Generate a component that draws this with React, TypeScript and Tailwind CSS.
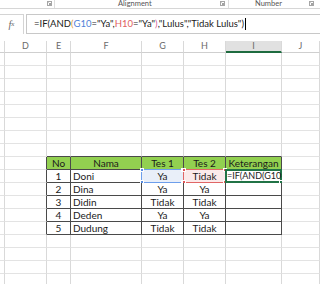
const COLS = ['', 'D', 'E', 'F', 'G', 'H', 'I', 'J'];

const TABLE = [
    ['No', 'Nama', 'Tes 1', 'Tes 2', 'Keterangan'],
    ['1', 'Doni', 'Ya', 'Tidak', ''],
    ['2', 'Dina', 'Ya', 'Ya', ''],
    ['3', 'Didin', 'Tidak', 'Tidak', ''],
    ['4', 'Deden', 'Ya', 'Ya', ''],
    ['5', 'Dudung', 'Tidak', 'Tidak', ''],
];

const FIRST_ROW = 9;
const ROWS = Array.from({ length: 18 }, (_, i) => i + 1);

function Launcher() {
    return (
        <svg width="5" height="5" viewBox="0 0 5 5" className="block">
            <rect x="0.5" y="0.5" width="4" height="4" fill="none" stroke="#a6a6a6" strokeWidth="1" />
            <path d="M1.5 1.5 L3.5 3.5 M3.5 2 L3.5 3.5 L2 3.5" stroke="#8a8a8a" strokeWidth="0.8" fill="none" />
        </svg>
    );
}

function Corners({ color }: { color: string }) {
    const sq = 'absolute h-[4px] w-[4px] border border-white';
    return (
        <>
            <span className={`${sq} -left-[2px] -top-[2px]`} style={{ background: color }} />
            <span className={`${sq} -right-[2px] -top-[2px]`} style={{ background: color }} />
            <span className={`${sq} -left-[2px] -bottom-[2px]`} style={{ background: color }} />
            <span className={`${sq} -right-[2px] -bottom-[2px]`} style={{ background: color }} />
        </>
    );
}

function Cell({ r, c }: { r: number; c: number }) {
    const inTable = r >= FIRST_ROW && r < FIRST_ROW + TABLE.length && c >= 2 && c <= 6;
    const darkRight = r >= FIRST_ROW && r < FIRST_ROW + TABLE.length && c >= 1 && c <= 6;
    const darkBottom = c >= 2 && c <= 6 && r >= FIRST_ROW - 1 && r < FIRST_ROW + TABLE.length;
    const isHead = inTable && r === FIRST_ROW;
    const text = inTable ? TABLE[r - FIRST_ROW][c - 2] : '';
    const isName = c === 3 && !isHead;
    const isG10 = r === 10 && c === 4;
    const isH10 = r === 10 && c === 5;
    const isI10 = r === 10 && c === 6;

    return (
        <div
            className={`relative h-[13px] border-b border-r text-[10px] leading-[12px] text-[#1a1a1a] ${
                darkRight ? 'border-r-[#4a4a4a]' : 'border-r-[#d9d9d9]'
            } ${darkBottom ? 'border-b-[#4a4a4a]' : 'border-b-[#e3e3e3]'} ${
                isHead ? 'bg-[#92d050]' : isG10 ? 'bg-[#e9eff9]' : isH10 ? 'bg-[#fbeaea]' : 'bg-white'
            } ${isName ? 'pl-[2px] text-left' : 'text-center'}`}
        >
            {text}
            {isG10 && (
                <div className="absolute -left-[1px] -top-[1px] h-[14px] w-[43px] border border-[#6d9eeb]">
                    <Corners color="#5b8fe0" />
                </div>
            )}
            {isH10 && (
                <div className="absolute -left-[1px] -top-[1px] h-[14px] w-[43px] border border-[#e06666]">
                    <Corners color="#e05858" />
                </div>
            )}
            {isI10 && (
                <div className="absolute -left-[1px] -top-[1px] h-[14px] w-[57px] border-2 border-[#217346] bg-white">
                    <div className="whitespace-nowrap text-left text-[9px] leading-[10px]">=IF(AND(G10=</div>
                    <span className="absolute -bottom-[3px] -right-[3px] h-[4px] w-[4px] border border-white bg-[#217346]" />
                </div>
            )}
        </div>
    );
}

export default function App() {
    return (
        <div className="h-[284px] w-[320px] overflow-hidden bg-white font-['Lato',sans-serif]">
            {/* ribbon group labels */}
            <div className="relative flex h-[9px] items-start border-b border-[#d6d6d6] text-[7.5px] leading-[8px] text-[#555]">
                <div className="flex w-[54px] justify-end pr-[2px] pt-[1px]">
                    <Launcher />
                </div>
                <div className="h-full w-px bg-[#dedede]" />
                <div className="flex w-[173px] items-start">
                    <span className="ml-[63px] flex-1">Alignment</span>
                    <span className="mr-[3px] pt-[1px]">
                        <Launcher />
                    </span>
                </div>
                <div className="h-full w-px bg-[#dedede]" />
                <div className="flex flex-1 items-start">
                    <span className="ml-[26px] flex-1">Number</span>
                    <span className="mr-[6px] pt-[1px]">
                        <Launcher />
                    </span>
                </div>
            </div>

            {/* formula bar */}
            <div className="mt-[5px] flex h-[20px]">
                <div className="flex w-[24px] items-center justify-center border-r border-t border-[#d4d4d4] font-['Liberation_Serif',serif] text-[10px] italic text-[#666]">
                    f<span className="text-[7px]">x</span>
                </div>
                <div className="ml-[2px] flex flex-1 items-center whitespace-nowrap border border-r-0 border-[#c8c8c8] pl-[7px] text-[9.5px] text-[#1a1a1a]">
                    =IF(AND<span className="text-[#d9a040]">(</span>
                    <span className="text-[#4f81d8]">G10</span>="Ya",<span className="text-[#e06060]">H10</span>="Ya"
                    <span className="text-[#d6609a]">)</span>,"Lulus","Tidak Lulus")
                    <span className="ml-[1px] inline-block h-[12px] w-px bg-black" />
                </div>
            </div>

            {/* sheet */}
            <div className="mt-[7px] grid grid-cols-[5px_42px_24px_71px_42px_42px_56px_1fr]">
                {COLS.map((col, i) => (
                    <div
                        key={col + i}
                        className={`h-[12px] border-r border-r-[#d9d9d9] text-center text-[9px] leading-[10px] text-[#6a6a6a] ${
                            col === 'I'
                                ? 'border-b-2 border-b-[#1e6b3f] bg-[#e1e1e1] text-[#1e5a36]'
                                : 'border-b border-b-[#cfcfcf]'
                        }`}
                    >
                        {col}
                    </div>
                ))}
                {ROWS.map((r) => COLS.map((_, c) => <Cell key={`${r}-${c}`} r={r} c={c} />))}
            </div>
        </div>
    );
}
